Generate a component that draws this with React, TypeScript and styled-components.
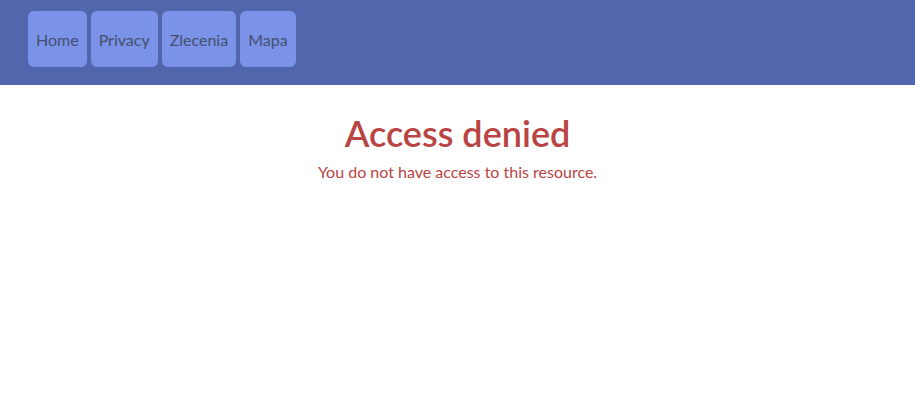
import React from "react";
import styled, { createGlobalStyle } from "styled-components";

const Global = createGlobalStyle`
  html, body { margin: 0; padding: 0; background: #ffffff; }
  body { font-family: Lato, "Open Sans", sans-serif; }
`;

const Header = styled.header`
  height: 85px;
  background: #5266ad;
  display: flex;
  align-items: center;
  padding: 0 28px;
  gap: 4px;
  box-sizing: border-box;
`;

const NavButton = styled.a`
  height: 56px;
  display: flex;
  align-items: center;
  padding: 0 8px;
  background: #7a92e8;
  border-radius: 6px;
  color: #45506e;
  font-size: 16px;
  text-decoration: none;
  margin-top: -7px;
`;

const Main = styled.main`
  display: flex;
  flex-direction: column;
  align-items: center;
  padding-top: 26px;
`;

const Title = styled.h1`
  margin: 0;
  font-size: 36px;
  font-weight: 600;
  color: #b94444;
  line-height: 44px;
`;

const Message = styled.p`
  margin: 6px 0 0;
  font-size: 16px;
  color: #b94444;
  line-height: 22px;
`;

export default function App() {
  return (
    <>
      <Global />
      <Header>
        {["Home", "Privacy", "Zlecenia", "Mapa"].map((t) => (
          <NavButton key={t} href="#">{t}</NavButton>
        ))}
      </Header>
      <Main>
        <Title>Access denied</Title>
        <Message>You do not have access to this resource.</Message>
      </Main>
    </>
  );
}
